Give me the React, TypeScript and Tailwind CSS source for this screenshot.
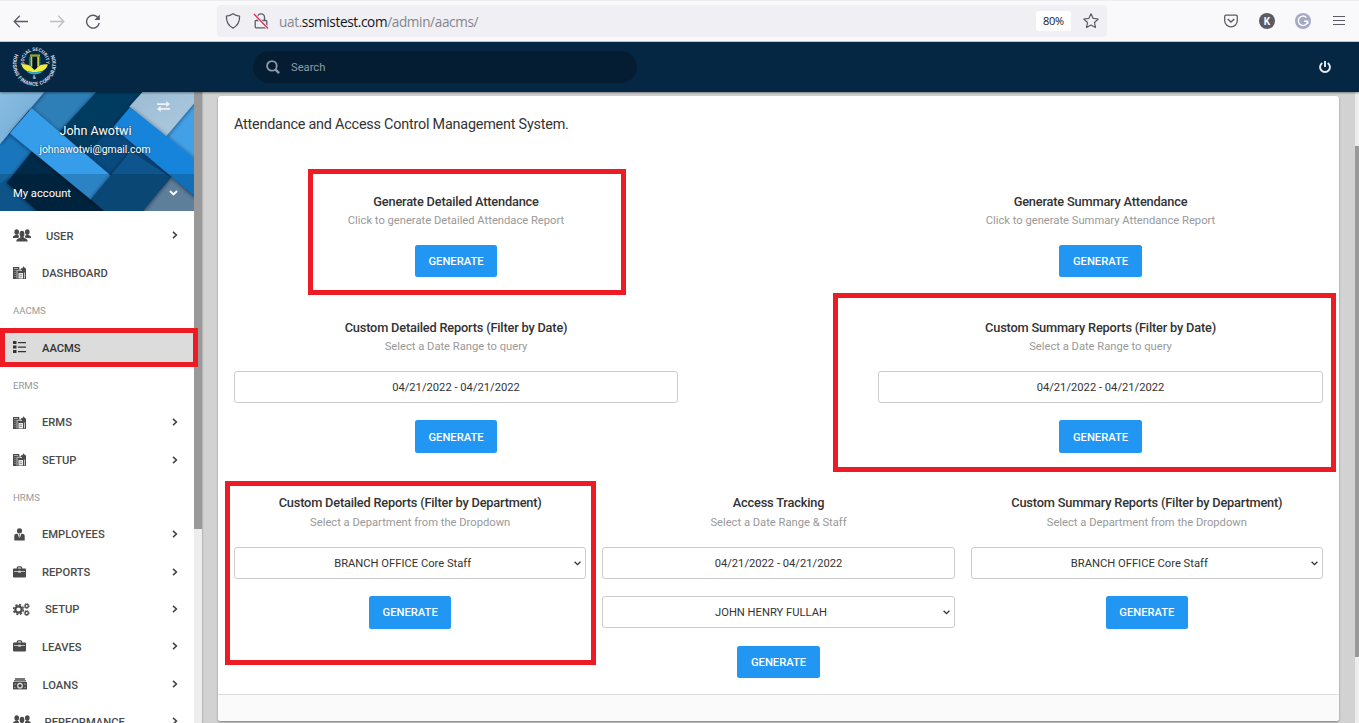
import type { ReactNode } from "react";

const people = (
  <svg className="h-[13px] w-[18px]" viewBox="0 0 18 13" fill="currentColor">
    <ellipse cx="3.700" cy="3" rx="2.300" ry="2.800" />
    <path d="M0 9V7.600C.6 6.400 2.200 6.600 2.700 5.400h2.100c.3.900 1 1 1.500 1.400L5.300 9z" />
    <ellipse cx="14.300" cy="3" rx="2.300" ry="2.800" />
    <path d="M18 9V7.600c-.6-1.200-2.200-1-2.700-2.200h-2.100c-.3.900-1 1-1.500 1.400L12.700 9z" />
    <ellipse cx="9" cy="4.900" rx="2.400" ry="3.200" />
    <path d="M3.300 12.400c.1-3.200 3.600-2.800 4.600-4.600h2.200c1 1.800 4.500 1.400 4.600 4.600z" />
  </svg>
);

const office = (
  <svg className="h-[14px] w-[13px]" viewBox="0 0 13 14" fill="none">
    <path d="M0 1h6.300v2.500H13V13H0z" fill="#4a4a4a" />
    <path d="M8 4V2.200h1.300L10.600.2l1.400 2h1V4z" fill="#4a4a4a" />
    <path d="M1 2.500h4M1.500 4.500h1M1.500 6.500h1M1.500 8.500h1M1.500 10.500h1" stroke="#c4c4c4" strokeWidth=".8" />
    <path d="M3.600 4.300h3.700M4 4.500v8M11.500 6.500v6M7 4.500h2" stroke="#d0d0d0" strokeWidth=".9" />
    <path d="M5.500 7h4.500v5.500H5.500z" fill="#e9e9e9" />
    <path d="M6.500 8.700h2.500M6.500 10.500h2.500" stroke="#888" strokeWidth=".8" />
  </svg>
);

const list = (
  <svg className="mb-px h-[14px] w-[13px]" viewBox="0 0 13 14" fill="currentColor">
    <path d="M0 1h3.500v3H0zM0 5.500h3.500v3H0zM0 10h3.500v3H0zM5 1.900h8v1.300H5zM5 6.400h8v1.300H5zM5 10.900h8v1.300H5z" />
  </svg>
);

const person = (
  <svg className="h-[13px] w-[13px]" viewBox="0 0 13 13" fill="currentColor">
    <circle cx="6.500" cy="2.800" r="2.600" />
    <path d="M1.300 12.500V7.700c0-1.200 1-2 2.500-2h.9l1.500 4.500.1-3.200-.6-1h1.600l-.6 1 .1 3.200 1.500-4.500h.9c1.500 0 2.500.8 2.500 2v4.800z" />
  </svg>
);

const briefcase = (
  <svg className="mb-px h-[12px] w-[13px]" viewBox="0 0 13 12" fill="none">
    <path d="M4.300 3V1.900c0-.7.4-1 1-1h2.400c.6 0 1 .3 1 1V3" stroke="#4a4a4a" strokeWidth="1.200" />
    <rect y="2.500" width="13" height="8.900" rx=".8" fill="#4a4a4a" />
    <path d="M1 5.500h4M8 5.500h4" stroke="#ccc" strokeWidth=".9" />
    <path d="M5 4.800h3v1.800H5z" fill="#ddd" />
  </svg>
);

const cogs = (
  <svg className="h-[13px] w-[17px]" viewBox="0 0 17 13" fill="none" stroke="currentColor">
    <circle cx="5.500" cy="6.500" r="3.200" strokeWidth="2.200" />
    <circle cx="5.500" cy="6.500" r="4.900" strokeWidth="1.600" strokeDasharray="2.100 1.750" />
    <circle cx="13.700" cy="3" r="1.600" strokeWidth="1.300" />
    <circle cx="13.700" cy="3" r="2.500" strokeWidth=".9" strokeDasharray="1.200 .76" />
    <circle cx="13.700" cy="10" r="1.600" strokeWidth="1.300" />
    <circle cx="13.700" cy="10" r="2.500" strokeWidth=".9" strokeDasharray="1.200 .76" />
  </svg>
);

const cash = (
  <svg className="h-[12px] w-[14px]" viewBox="0 0 14 12" fill="none">
    <path d="M2 1h10M1 2.900h12" stroke="#4a4a4a" strokeWidth="1.300" />
    <rect y="4" width="14" height="7.400" fill="#4a4a4a" />
    <path d="M1.200 6.200h2M1.200 9.600h1.500M11 6.200h2M11.300 9.600h1.500" stroke="#bbb" strokeWidth=".8" />
    <circle cx="7" cy="7.700" r="2.300" stroke="#e5e5e5" strokeWidth="1.100" />
  </svg>
);

type Item = { label: string; icon?: ReactNode; arrow?: boolean; gap?: string; active?: boolean };

const items: Item[] = [
  { label: "USER", icon: people, arrow: true, gap: "ml-[15px]" },
  { label: "DASHBOARD", icon: office },
  { label: "AACMS" },
  { label: "AACMS", icon: list, active: true },
  { label: "ERMS" },
  { label: "ERMS", icon: office, arrow: true, gap: "ml-4 -mt-px" },
  { label: "SETUP", icon: office, arrow: true },
  { label: "HRMS" },
  { label: "EMPLOYEES", icon: person, arrow: true, gap: "ml-4 -mt-px" },
  { label: "REPORTS", icon: briefcase, arrow: true },
  { label: "SETUP", icon: cogs, arrow: true, gap: "ml-[15px] -mt-px" },
  { label: "LEAVES", icon: briefcase, arrow: true },
  { label: "LOANS", icon: cash, arrow: true, gap: "ml-[15.500px] mt-px" },
  { label: "PERFORMANCE", icon: people, arrow: true, gap: "ml-[13.500px]" },
];

function NavItem({ item }: { item: Item }) {
  if (!item.icon) {
    return (
      <li className="flex h-[37.400px] items-center pt-[2px] pl-[13px] text-[9.600px] text-[#999]">{item.label}</li>
    );
  }
  return (
    <li
      className={
        item.active
          ? "flex h-[37.400px] items-center bg-[#dcdcdc] pl-[13px] text-[#333]"
          : "flex h-[37.400px] items-center pl-[13px] text-[#4a4a4a]"
      }
    >
      {item.icon}
      <span className={`${item.gap ?? "ml-4"} pt-[2.600px] text-[11.200px] font-medium`}>{item.label}</span>
      {item.arrow && (
        <svg className="mr-[16px] mb-px ml-auto h-[8px] w-[6px]" viewBox="0 0 6 8" fill="none">
          <path d="M1 .8 4.400 4 1 7.200" stroke="#444" strokeWidth="1.600" />
        </svg>
      )}
    </li>
  );
}

function Profile() {
  return (
    <div className="relative h-[119px] shrink-0 overflow-hidden text-white">
      <svg className="absolute inset-0 h-[119px] w-[194px]" viewBox="0 6 582 357" preserveAspectRatio="none">
        <defs>
          <linearGradient id="pale" x1="0" y1="0" x2="1" y2="1">
            <stop offset="0" stopColor="#8bbde1" />
            <stop offset="1" stopColor="#6da9d5" />
          </linearGradient>
          <linearGradient id="mist" x1="0" y1="0" x2="1" y2="1">
            <stop offset="0" stopColor="#9cbcd4" />
            <stop offset="1" stopColor="#adc9de" />
          </linearGradient>
          <filter id="shade" x="-20%" y="-20%" width="140%" height="140%">
            <feDropShadow dx="0" dy="2" stdDeviation="7" floodColor="#001428" floodOpacity=".6" />
          </filter>
        </defs>
        <rect y="6" width="582" height="357" fill="#0b4f86" />
        <path d="M120 0h180L170 140 85 60z" fill="#2e7fb8" />
        <path d="M0 150 40 125 110 190 0 310z" fill="#1a76bc" />
        <path d="M0 280 25 265 125 363H0z" fill="#1165a4" />
        <path d="M295 0h140L240 215 165 140z" fill="#063a60" filter="url(#shade)" />
        <path d="M95 185 20 278 118 370H340L250 290z" fill="#042b48" filter="url(#shade)" />
        <path d="M0 0h138L0 162z" fill="url(#pale)" filter="url(#shade)" />
        <path d="M340 110 395 190 330 260 255 195z" fill="#084a7d" />
        <path d="M582 35V220L490 145z" fill="#42a1e6" />
        <path d="M433 0H600V19L497 140 388 50z" fill="url(#mist)" filter="url(#shade)" />
        <path d="M515 260 590 326V370H420z" fill="#7198b8" />
        <path d="M390 52 590 211V325L340 112z" fill="#1584da" filter="url(#shade)" />
        <path d="M95 55 334 258 274 330 30 130z" fill="#359de9" filter="url(#shade)" />
        <path d="M392 184 512 262 424 370H320L272 328z" fill="#0b548c" filter="url(#shade)" />
        <rect y="252" width="582" height="112" fill="#000" opacity=".16" />
      </svg>
      <div className="relative flex h-[83px] flex-col items-center [text-shadow:0_0_2px_rgba(0,0,0,.6)]">
        <svg className="mt-[9px] mr-[24px] h-[11px] w-[13px] self-end opacity-80" viewBox="0 0 13 11" fill="none">
          <path d="M0 3.100h10.500M2.500 7.900H13" stroke="#fff" strokeWidth="1.700" />
          <path d="M9.300 0 13 3.100 9.300 6.200zM3.700 4.800 0 7.900l3.700 3.100z" fill="#fff" />
        </svg>
        <div className="mt-[10px] ml-[-3px] text-[12.500px] leading-[17px]">John Awotwi</div>
        <div className="mt-[3px] ml-[-4px] text-[10.400px] leading-[15px]">johnawotwi@gmail.com</div>
      </div>
      <div className="relative flex h-[36px] items-center justify-between pr-[16px] pl-[13px] text-[11.200px]">
        <span className="pt-[2px]">My account</span>
        <svg className="h-[6px] w-[9px]" viewBox="0 0 9 6" fill="none">
          <path d="m1 1 3.500 3.400L8 1" stroke="#fff" strokeWidth="1.900" />
        </svg>
      </div>
    </div>
  );
}

function Logo() {
  return (
    <svg className="h-[44px] w-[48px] overflow-visible" viewBox="0 0 48 44" fill="none">
      <defs>
        <path id="inner" d="M14.600 20A11 11 0 1 1 35.600 20" />
        <path id="outer" d="M5.900 8A21.600 21.600 0 1 0 42.900 8" />
      </defs>
      <text fill="#d5dfe8" fontFamily="Roboto, sans-serif" fontWeight="700" fontSize="4.700">
        <textPath href="#inner" textLength="39" startOffset=".5">SOCIAL SECURITY</textPath>
      </text>
      <text fill="#d5dfe8" fontFamily="Roboto, sans-serif" fontWeight="700" fontSize="5.200">
        <textPath href="#outer" textLength="88" startOffset="1">HOUSING FINANCE CORPORATION</textPath>
      </text>
      <text x="22.800" y="34.300" fill="#d5dfe8" fontFamily="Roboto, sans-serif" fontWeight="500" fontSize="4.500">&amp;</text>
      <path d="M20 9.500h10v2H20z" fill="#b9c42c" />
      <path d="M20.500 11.500h1.800v10h-1.800zM27.300 11.500h1.800v10h-1.800z" fill="#c6cf33" />
      <path d="M20.500 10.500h9" stroke="#30aab5" strokeWidth=".8" />
      <path d="M22.800 12h4v12h-4z" fill="#05131f" />
      <path d="M19.800 12v8.500M29.800 12v8.500" stroke="#279ca8" strokeWidth=".9" />
      <path d="M11.500 19.500c4-.5 8.500.4 11 3.500v3.800c-6 .2-10-2.600-11-7.300zM37.800 19.500c-4-.5-8.500.4-11 3.500v3.800c6 .2 10-2.600 11-7.300z" fill="#efea42" />
      <path d="M21.500 22.500l3.100 2.500 3.100-2.500v4.700h-6.200z" fill="#e5ee4b" />
      <path d="M16.500 25.800c4 2 12.300 2 16.300 0-1.500 4.600-14.800 4.600-16.300 0z" fill="#2bb7cf" />
    </svg>
  );
}

function BrowserBar() {
  return (
    <div className="flex h-[42px] shrink-0 items-center border-t border-b border-t-[#ececef] border-b-[#cccccf] bg-[#f9f9fb] text-[#5b5b66]">
      <svg className="ml-[13px] h-4 w-4" viewBox="0 0 16 16" fill="none" stroke="currentColor" strokeWidth="1.300">
        <path d="M1.200 8.500H15M6.800 2.800 1.200 8.500l5.600 5.700" />
      </svg>
      <svg className="ml-[20px] h-4 w-4 text-[#bdbdc3]" viewBox="0 0 16 16" fill="none" stroke="currentColor" strokeWidth="1.300">
        <path d="M1 8.500h13.800M9.200 2.800l5.600 5.700-5.600 5.700" />
      </svg>
      <svg className="ml-[20px] h-4 w-4" viewBox="0 0 16 16" fill="none" stroke="currentColor" strokeWidth="1.400">
        <path d="M14.300 9.800A6.400 6.400 0 1 1 12.600 4.200" />
        <path d="M14.800 1.500V7H9.300z" fill="currentColor" stroke="none" />
      </svg>
      <div className="ml-[116px] flex h-[32px] w-[890px] items-center rounded bg-[#f0f0f4]">
        <svg className="ml-[8px] h-4 w-4" viewBox="0 0 16 16" fill="none" stroke="currentColor" strokeWidth="1.300">
          <path d="M8 .8c2.100 1.400 4.300 2.100 6.600 2.300.2 5.500-2 9.700-6.600 12.100C3.400 12.800 1.200 8.600 1.400 3.100 3.700 2.900 5.900 2.200 8 .8z" strokeLinejoin="round" />
        </svg>
        <svg className="ml-[12px] h-4 w-4" viewBox="0 0 16 16" fill="none" stroke="currentColor" strokeWidth="1.300">
          <rect x="2.200" y="7.500" width="11.600" height="7.300" rx="1" />
          <path d="M4.500 7.500V4.300a3.500 3.500 0 0 1 7 0v3.200" />
          <path d="M1 1l14 14.500" stroke="#f0f0f4" strokeWidth="3" />
          <path d="M1 1l14 14.500" stroke="#e22850" />
        </svg>
        <span className="ml-[10px] pt-[2px] font-['Open_Sans',sans-serif] text-[13.600px] tracking-[-0.370px] text-[#85858d]">
          uat.<span className="text-[#15141a]">ssmistest.com</span>/admin/aacms/
        </span>
        <span className="mr-[12px] ml-auto flex h-5 w-[35px] items-center justify-center rounded-[3px] bg-white pt-px font-['Open_Sans',sans-serif] text-[11px] tracking-[-0.300px] text-[#15141a]">
          80%
        </span>
        <svg className="mr-[8px] h-4 w-4" viewBox="0 0 16 16" fill="none" stroke="currentColor" strokeWidth="1.200" strokeLinejoin="round">
          <path d="m8 .8 2.200 4.600 5 .6-3.700 3.500 1 5L8 12l-4.500 2.500 1-5L.8 6l5-.6z" />
        </svg>
      </div>
      <svg className="ml-[117px] h-[14px] w-[14px]" viewBox="0 0 14 14" fill="none" stroke="currentColor" strokeWidth="1.300">
        <path d="M2 1.200h10c.8 0 1.300.5 1.300 1.300V6.500a6.300 6.300 0 0 1-12.600 0V2.500C.7 1.700 1.200 1.200 2 1.200z" />
        <path d="M3.700 5 7 8l3.300-3" strokeWidth="1.500" />
      </svg>
      <span className="ml-[21px] flex h-4 w-4 items-center justify-center rounded-full bg-[#5b5b66] text-[10px] font-bold text-white">K</span>
      <svg className="ml-[20px] h-4 w-4" viewBox="0 0 16 16" fill="none">
        <circle cx="8" cy="8" r="8" fill="#a4a9c6" />
        <path d="M11.400 4.500A4.700 4.700 0 1 0 12.700 8.300H9M12.700 8v3" stroke="#fff" strokeWidth="1.400" />
      </svg>
      <svg className="ml-[22px] h-[10px] w-[12px]" viewBox="0 0 12 10" stroke="currentColor" strokeWidth="1.100">
        <path d="M0 .5h12M0 4.500h12M0 8.500h12" />
      </svg>
    </div>
  );
}

function Heading({ title, note, low }: { title: string; note: string; low?: boolean }) {
  return (
    <>
      <h6 className="h-[19px] text-[12.800px] leading-[19px] font-medium tracking-[-0.015em] whitespace-nowrap text-[#333]">
        {title}
      </h6>
      <p
        className={
          low
            ? "h-[19px] text-[11.200px] leading-[21px] whitespace-nowrap text-[#999]"
            : "h-[19px] text-[11.200px] leading-[19px] whitespace-nowrap text-[#999]"
        }
      >
        {note}
      </p>
    </>
  );
}

function Generate({ className }: { className: string }) {
  return (
    <button
      className={`${className} w-[82.400px] shrink-0 rounded-[2.500px] bg-[#2196f3] text-[11.200px] font-medium text-white`}
    >
      GENERATE
    </button>
  );
}

function Field({ value, select, className }: { value: string; select?: boolean; className: string }) {
  return (
    <div
      className={`${className} flex h-8 w-full shrink-0 items-center rounded-[3px] border border-[#ccc] bg-white text-[11.200px] text-[#333]`}
    >
      <span className={select ? "ml-[20px] flex-1 pt-[2px] text-center" : "flex-1 pt-[2px] text-center"}>{value}</span>
      {select && (
        <svg className="mr-[4px] ml-[24px] h-[5px] w-[7px]" viewBox="0 0 7 5" fill="none">
          <path d="m.6.8 2.900 2.900L6.400.8" stroke="#333" strokeWidth="1.300" />
        </svg>
      )}
    </div>
  );
}

const DATES = "04/21/2022 - 04/21/2022";

export default function App() {
  return (
    <div className="relative flex h-[723px] w-[1359px] flex-col overflow-hidden bg-[#d2d2d2] font-[Roboto,sans-serif]">
      <BrowserBar />
      <header className="relative z-10 flex h-[50px] shrink-0 items-center bg-[#062743] shadow-[0_1px_2px_rgba(0,0,0,.4)]">
        <div className="ml-[10px]">
          <Logo />
        </div>
        <div className="ml-[195px] flex h-8 w-[384px] items-center rounded-full bg-[#051d33] text-[11.200px] text-[#8e9ba7]">
          <svg className="ml-[13px] h-[14px] w-[14px]" viewBox="0 0 14 14" fill="none" stroke="#8e9ba7">
            <circle cx="5.900" cy="5.900" r="4.800" strokeWidth="1.800" />
            <path d="m9.300 9.300 3.800 3.800" strokeWidth="2.400" />
          </svg>
          <span className="ml-[11px] pt-[2px]">Search</span>
        </div>
        <svg className="mr-[28px] ml-auto h-[12px] w-[12px]" viewBox="0 0 12 12" fill="none" stroke="#e8edf1" strokeWidth="1.900">
          <path d="M3.300 2a4.900 4.900 0 1 0 5.400 0M6 0v6" />
        </svg>
      </header>

      <div className="flex min-h-0 flex-1">
        <aside className="flex w-[194px] shrink-0 flex-col overflow-hidden bg-white">
          <Profile />
          <ul className="pt-[6px]">
            {items.map((item, i) => (
              <NavItem key={i} item={item} />
            ))}
          </ul>
        </aside>
        <div className="w-2 shrink-0 bg-[#ededed]">
          <div className="h-[437px] bg-[#999]" />
        </div>

        <main className="min-w-0 flex-1 pt-1 pr-4 pl-4 shadow-[inset_1px_0_1px_rgba(0,0,0,.15)]">
          <div className="flex h-[625px] flex-col overflow-hidden rounded-[3px] bg-white shadow-[0_1px_2px_rgba(0,0,0,.4)]">
            <h5 className="mt-[19px] ml-4 h-5 shrink-0 text-[14.400px] leading-5 tracking-[-0.015em] text-[#333]">
              Attendance and Access Control Management System.
            </h5>
            <div className="mx-4 mt-[57px] flex h-[126px] shrink-0 justify-between">
              <section className="flex w-[444px] flex-col items-center">
                <Heading title="Generate Detailed Attendance" note="Click to generate Detailed Attendace Report" />
                <Generate className="mt-[15px] h-8 pt-[3px]" />
              </section>
              <section className="flex w-[445px] flex-col items-center">
                <Heading title="Generate Summary Attendance" note="Click to generate Summary Attendance Report" />
                <Generate className="mt-[15px] h-8 pt-[3px]" />
              </section>
            </div>
            <div className="mx-4 flex h-[175px] shrink-0 justify-between">
              <section className="flex w-[444px] flex-col items-center">
                <Heading title="Custom Detailed Reports (Filter by Date)" note="Select a Date Range to query" />
                <Field className="mt-[15px]" value={DATES} />
                <Generate className="mt-[17px] h-[33px] pt-[3px]" />
              </section>
              <section className="flex w-[445px] flex-col items-center">
                <Heading title="Custom Summary Reports (Filter by Date)" note="Select a Date Range to query" />
                <Field className="mt-[15px]" value={DATES} />
                <Generate className="mt-[17px] h-[33px] pt-[3px]" />
              </section>
            </div>
            <div className="mx-4 grid h-[201px] shrink-0 grid-cols-3 gap-4">
              <section className="flex flex-col items-center">
                <Heading low title="Custom Detailed Reports (Filter by Department)" note="Select a Department from the Dropdown" />
                <Field className="mt-4" value="BRANCH OFFICE Core Staff" select />
                <Generate className="mt-[17px] h-[33px] pt-[1.500px]" />
              </section>
              <section className="flex flex-col items-center">
                <Heading low title="Access Tracking" note="Select a Date Range & Staff" />
                <Field className="mt-4" value={DATES} />
                <Field className="mt-[17px]" value="JOHN HENRY FULLAH" select />
                <Generate className="mt-[18px] h-8 pt-[3px]" />
              </section>
              <section className="flex flex-col items-center">
                <Heading low title="Custom Summary Reports (Filter by Department)" note="Select a Department from the Dropdown" />
                <Field className="mt-4" value="BRANCH OFFICE Core Staff" select />
                <Generate className="mt-[17px] h-[33px] pt-[1.500px]" />
              </section>
            </div>
            <div className="flex-1 border-t border-[#ddd] bg-[#fafafa]" />
          </div>
        </main>
        <div className="w-1 shrink-0 bg-[#ededed] pt-[54px]">
          <div className="h-[511px] bg-[#999]" />
        </div>
      </div>

      <div className="absolute top-[328px] left-0 z-20 h-[39px] w-[198px] border-[5px] border-[#ed1c24]" />
      <div className="absolute top-[169px] left-[308px] z-20 h-[126px] w-[318px] border-[5px] border-[#ed1c24]" />
      <div className="absolute top-[293px] left-[833px] z-20 h-[179px] w-[503px] border-[5px] border-[#ed1c24]" />
      <div className="absolute top-[481px] left-[225px] z-20 h-[184px] w-[371px] border-[5px] border-[#ed1c24]" />
    </div>
  );
}
